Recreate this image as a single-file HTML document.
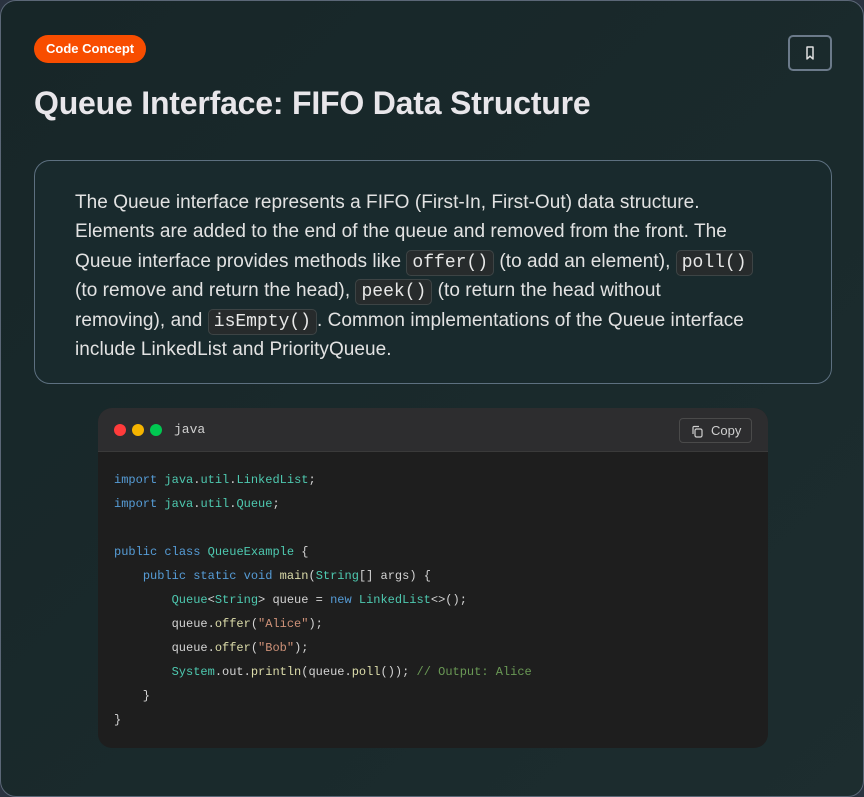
<!DOCTYPE html>
<html><head><meta charset="utf-8"><style>
*{box-sizing:border-box;margin:0;padding:0}
body{width:864px;height:797px;background:#2a3340;font-family:"Liberation Sans",sans-serif;overflow:hidden}
.card{position:absolute;left:0;top:0;width:864px;height:797px;border:1px solid #5b6777;border-radius:16px;background:linear-gradient(135deg,#172628 0%,#1a2a2c 60%,#1d2d2f 100%)}
.tag{position:absolute;left:33px;top:34px;height:28px;padding:0 12px;border-radius:14px;background:#f84d00;color:#fff;font-weight:bold;font-size:13px;line-height:28px}
.bm{position:absolute;left:787px;top:34px;width:44px;height:36px;border:2px solid #6b7a8a;border-radius:5px}
h1{position:absolute;left:33px;top:84px;font-size:32px;font-weight:bold;color:#e8e6ea;letter-spacing:-0.2px;white-space:nowrap}
.desc{position:absolute;left:33px;top:159px;width:798px;height:224px;border:1px solid #5d7080;border-radius:16px;background:#192a2d;padding:27px 40px;color:#e2e2e2;font-size:19px;line-height:29.4px;white-space:nowrap;letter-spacing:0.05px}
.desc code{font-family:"Liberation Mono",monospace;font-size:18px;line-height:1;background:#272b2c;border:1px solid #3d4445;border-radius:5px;padding:2px 5px;color:#e8e8e8;letter-spacing:0}
.code{position:absolute;left:97px;top:407px;width:670px;height:340px;border-radius:14px;background:#1e1e1e;overflow:hidden}
.hd{height:44px;background:#2d2d2f;border-bottom:1px solid #3a3a3a;position:relative}
.dot{position:absolute;top:16px;width:12px;height:12px;border-radius:50%}
.lang{position:absolute;left:76px;top:14px;color:#d0d0d0;font-family:"Liberation Mono",monospace;font-size:13px}
.copy{position:absolute;left:581px;top:10px;width:73px;height:25px;border:1px solid #4a4a4a;border-radius:4px;color:#cfcfcf;font-size:13px;line-height:23px;padding-left:31px}
pre{position:absolute;left:16px;top:60px;font-family:"Liberation Mono",monospace;font-size:12px;line-height:24px;color:#d4d4d4}
.k{color:#569cd6}.t{color:#4ec9b0}.s{color:#ce9178}.f{color:#dcdcaa}.c{color:#6a9955}
</style></head><body>
<div class="card">
<div class="tag">Code Concept</div>
<div class="bm"><svg width="40" height="32" viewBox="0 0 40 32"><path d="M17 10h6v12l-3-2.8-3 2.8z" fill="none" stroke="#e0e0e0" stroke-width="1.5" stroke-linejoin="round"/></svg></div>
<h1>Queue Interface: FIFO Data Structure</h1>
<div class="desc">The Queue interface represents a FIFO (First-In, First-Out) data structure.<br>Elements are added to the end of the queue and removed from the front. The<br>Queue interface provides methods like <code>offer()</code> (to add an element), <code>poll()</code><br>(to remove and return the head), <code>peek()</code> (to return the head without<br>removing), and <code>isEmpty()</code>. Common implementations of the Queue interface<br>include LinkedList and PriorityQueue.</div>
<div class="code">
<div class="hd">
<div class="dot" style="left:16px;background:#ff3b3b"></div>
<div class="dot" style="left:34px;background:#f5b400"></div>
<div class="dot" style="left:52px;background:#00c851"></div>
<div class="lang">java</div>
<div class="copy"><svg style="position:absolute;left:11px;top:6px" width="13" height="13" viewBox="0 0 13 13"><rect x="4" y="4" width="7" height="8" rx="1.5" fill="none" stroke="#cfcfcf" stroke-width="1.2"/><path d="M2 9V2.5A1 1 0 0 1 3 1.5h5" fill="none" stroke="#cfcfcf" stroke-width="1.2"/></svg>Copy</div>
</div>
<pre><span class="k">import</span> <span class="t">java</span>.<span class="t">util</span>.<span class="t">LinkedList</span>;
<span class="k">import</span> <span class="t">java</span>.<span class="t">util</span>.<span class="t">Queue</span>;

<span class="k">public</span> <span class="k">class</span> <span class="t">QueueExample</span> {
    <span class="k">public</span> <span class="k">static</span> <span class="k">void</span> <span class="f">main</span>(<span class="t">String</span>[] args) {
        <span class="t">Queue</span>&lt;<span class="t">String</span>&gt; queue = <span class="k">new</span> <span class="t">LinkedList</span>&lt;&gt;();
        queue.<span class="f">offer</span>(<span class="s">"Alice"</span>);
        queue.<span class="f">offer</span>(<span class="s">"Bob"</span>);
        <span class="t">System</span>.out.<span class="f">println</span>(queue.<span class="f">poll</span>()); <span class="c">// Output: Alice</span>
    }
}</pre>
</div>
</div>
</body></html>
